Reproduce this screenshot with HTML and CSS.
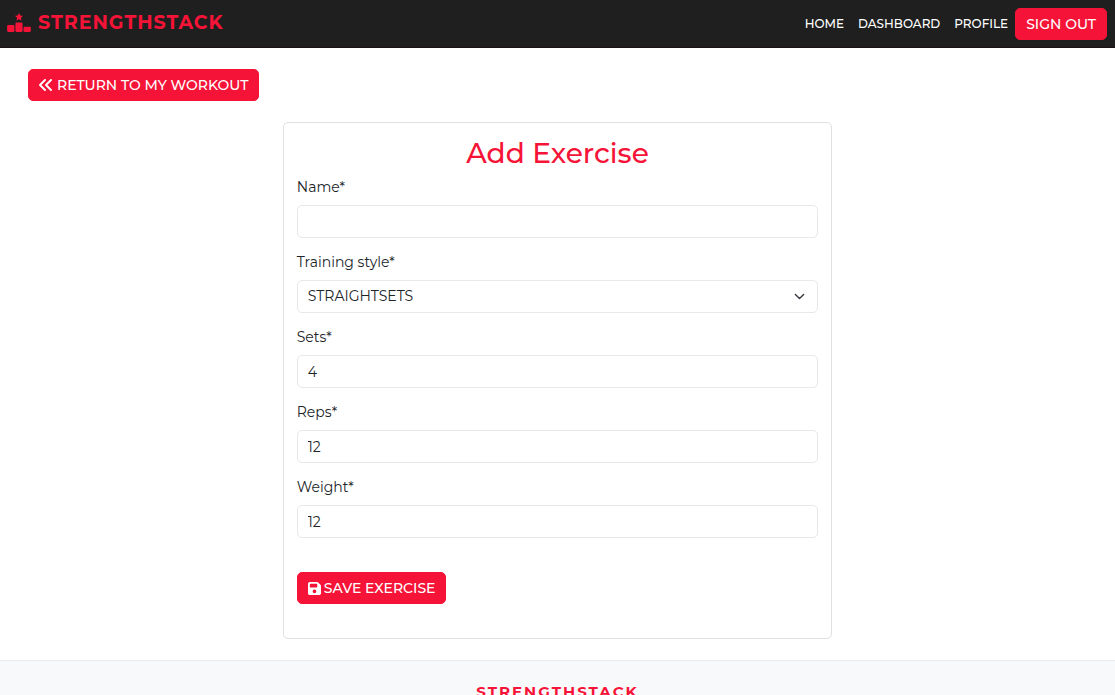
FILE: index.html
```html
<!DOCTYPE html>
<html lang="en">
<head>
<meta charset="utf-8">
<meta name="viewport" content="width=device-width, initial-scale=1">
<title>StrengthStack - Add Exercise</title>
<link rel="stylesheet" href="styles.css">
</head>
<body>
<header class="navbar">
  <a class="brand" href="#">
    <svg class="brand-icon" viewBox="0 0 640 512" aria-hidden="true"><path fill="currentColor" d="M320 0l33 66 74 11-53 52 12 73-66-34-66 34 12-73-53-52 74-11zM256 256c-17.700 0-32 14.300-32 32v192c0 17.700 14.300 32 32 32h128c17.700 0 32-14.300 32-32V288c0-17.700-14.300-32-32-32H256zM32 320c-17.700 0-32 14.300-32 32v128c0 17.700 14.300 32 32 32h134c17.700 0 32-14.300 32-32V352c0-17.700-14.300-32-32-32H32zm410 84v76c0 17.700 14.300 32 32 32h134c17.700 0 32-14.300 32-32v-76c0-17.700-14.300-32-32-32H474c-17.700 0-32 14.300-32 32z"/></svg>
    <span>STRENGTHSTACK</span>
  </a>
  <nav class="nav-links">
    <a class="nav-link" href="#">HOME</a>
    <a class="nav-link" href="#">DASHBOARD</a>
    <a class="nav-link" href="#">PROFILE</a>
    <button class="btn" type="button">SIGN OUT</button>
  </nav>
</header>
<main class="page">
  <a class="btn back" href="#">
    <svg class="icon-back" viewBox="0 0 14 12" aria-hidden="true"><path d="M6 1 1 6l5 5M12 1 7 6l5 5" fill="none" stroke="currentColor" stroke-width="1.900" stroke-linecap="round" stroke-linejoin="round"/></svg>
    <span>RETURN TO MY WORKOUT</span>
  </a>
  <section class="card">
    <h1 class="title">Add Exercise</h1>
    <form class="form">
      <div class="field">
        <label class="label" for="name">Name*</label>
        <input class="control" id="name" type="text" required>
      </div>
      <div class="field">
        <label class="label" for="style">Training style*</label>
        <div class="select-wrap">
          <select class="control" id="style"><option>STRAIGHTSETS</option></select>
          <svg class="chevron" viewBox="0 0 16 16" aria-hidden="true"><path d="m2 5 6 6 6-6" fill="none" stroke="#343a40" stroke-width="2" stroke-linecap="round" stroke-linejoin="round"/></svg>
        </div>
      </div>
      <div class="field">
        <label class="label" for="sets">Sets*</label>
        <input class="control" id="sets" type="number" value="4" required>
      </div>
      <div class="field">
        <label class="label" for="reps">Reps*</label>
        <input class="control" id="reps" type="number" value="12" required>
      </div>
      <div class="field">
        <label class="label" for="weight">Weight*</label>
        <input class="control" id="weight" type="number" value="12" required>
      </div>
      <button class="btn save" type="submit">
        <svg class="icon-save" viewBox="0 0 448 448" aria-hidden="true"><path fill="currentColor" fill-rule="evenodd" d="M64 0C28.700 0 0 28.700 0 64v320c0 35.300 28.700 64 64 64h320c35.300 0 64-28.700 64-64V141.300c0-17-6.700-33.300-18.700-45.300L352 18.700C340 6.700 323.700 0 306.700 0H64zm0 96c0-17.700 14.300-32 32-32h192c17.700 0 32 14.300 32 32v64c0 17.700-14.300 32-32 32H96c-17.700 0-32-14.300-32-32V96zm160 160a64 64 0 1 1 0 128 64 64 0 1 1 0-128z"/></svg>
        <span>SAVE EXERCISE</span>
      </button>
    </form>
  </section>
</main>
<footer class="footer">
  <p class="footer-brand">STRENGTHSTACK</p>
</footer>
</body>
</html>
```
FILE: styles.css
```css
* {
  box-sizing: border-box;
}

html {
  overflow-x: hidden;
  scrollbar-width: none;
}

body {
  margin: 0;
  background: #fff;
  color: #212529;
  font-family: Montserrat, Inter, "Open Sans", sans-serif;
  font-size: 14px;
  line-height: 21px;
}

.navbar {
  display: flex;
  align-items: center;
  justify-content: space-between;
  min-height: 48px;
  padding: 0 8px 0 7px;
  background: #1f1f1f;
  border-bottom: 1px solid #1a1216;
}

.brand {
  display: flex;
  align-items: center;
  gap: 7px;
  padding-bottom: 2px;
  color: #f51337;
  font-size: 19px;
  font-weight: 700;
  letter-spacing: 1px;
  text-decoration: none;
}

.brand-icon {
  width: 24px;
  height: 19px;
}

.nav-links {
  display: flex;
  align-items: center;
}

.nav-link {
  padding: 0 7px;
  color: #fff;
  font-size: 12px;
  font-weight: 500;
  text-decoration: none;
}

.btn {
  display: inline-flex;
  align-items: center;
  gap: 4px;
  padding: 5px 10px;
  border: 1px solid #f51337;
  border-radius: 5px;
  background: #f51337;
  color: #fff;
  font-family: inherit;
  font-size: 14px;
  font-weight: 500;
  line-height: 20px;
  text-decoration: none;
  white-space: nowrap;
  cursor: pointer;
}

.page {
  padding: 21px 8px;
}

.back {
  margin-left: 20px;
}

.icon-back {
  width: 14px;
  height: 12px;
}

.card {
  width: 50%;
  min-width: 300px;
  margin: 21px auto 0;
  padding: 14px 13px 34px;
  border: 1px solid #dfe0e1;
  border-radius: 5px;
}

.title {
  margin: 0 0 8px;
  color: #f51337;
  font-size: 28px;
  font-weight: 500;
  line-height: 32px;
  text-align: center;
}

.field {
  margin-bottom: 14px;
}

.label {
  display: block;
  margin-bottom: 7px;
}

.control {
  display: block;
  width: 100%;
  height: 33px;
  padding: 5px 10px;
  border: 1px solid #e6e8ea;
  border-radius: 5px;
  background: #fff;
  color: #212529;
  font: inherit;
  appearance: none;
}

.control[type="number"] {
  appearance: textfield;
}

.select-wrap {
  display: grid;
  align-items: center;
}

.select-wrap > * {
  grid-area: 1 / 1;
}

.chevron {
  justify-self: end;
  width: 11px;
  height: 11px;
  margin-right: 13px;
  pointer-events: none;
}

.save {
  gap: 3px;
  margin-top: 20px;
}

.icon-save {
  width: 13px;
  height: 13px;
}

.footer {
  padding: 20px 8px;
  border-top: 1px solid #e9ebee;
  background: #f8f9fb;
  text-align: center;
}

.footer-brand {
  margin: 0;
  color: #f51337;
  font-size: 15px;
  font-weight: 700;
  letter-spacing: 2px;
}
```
